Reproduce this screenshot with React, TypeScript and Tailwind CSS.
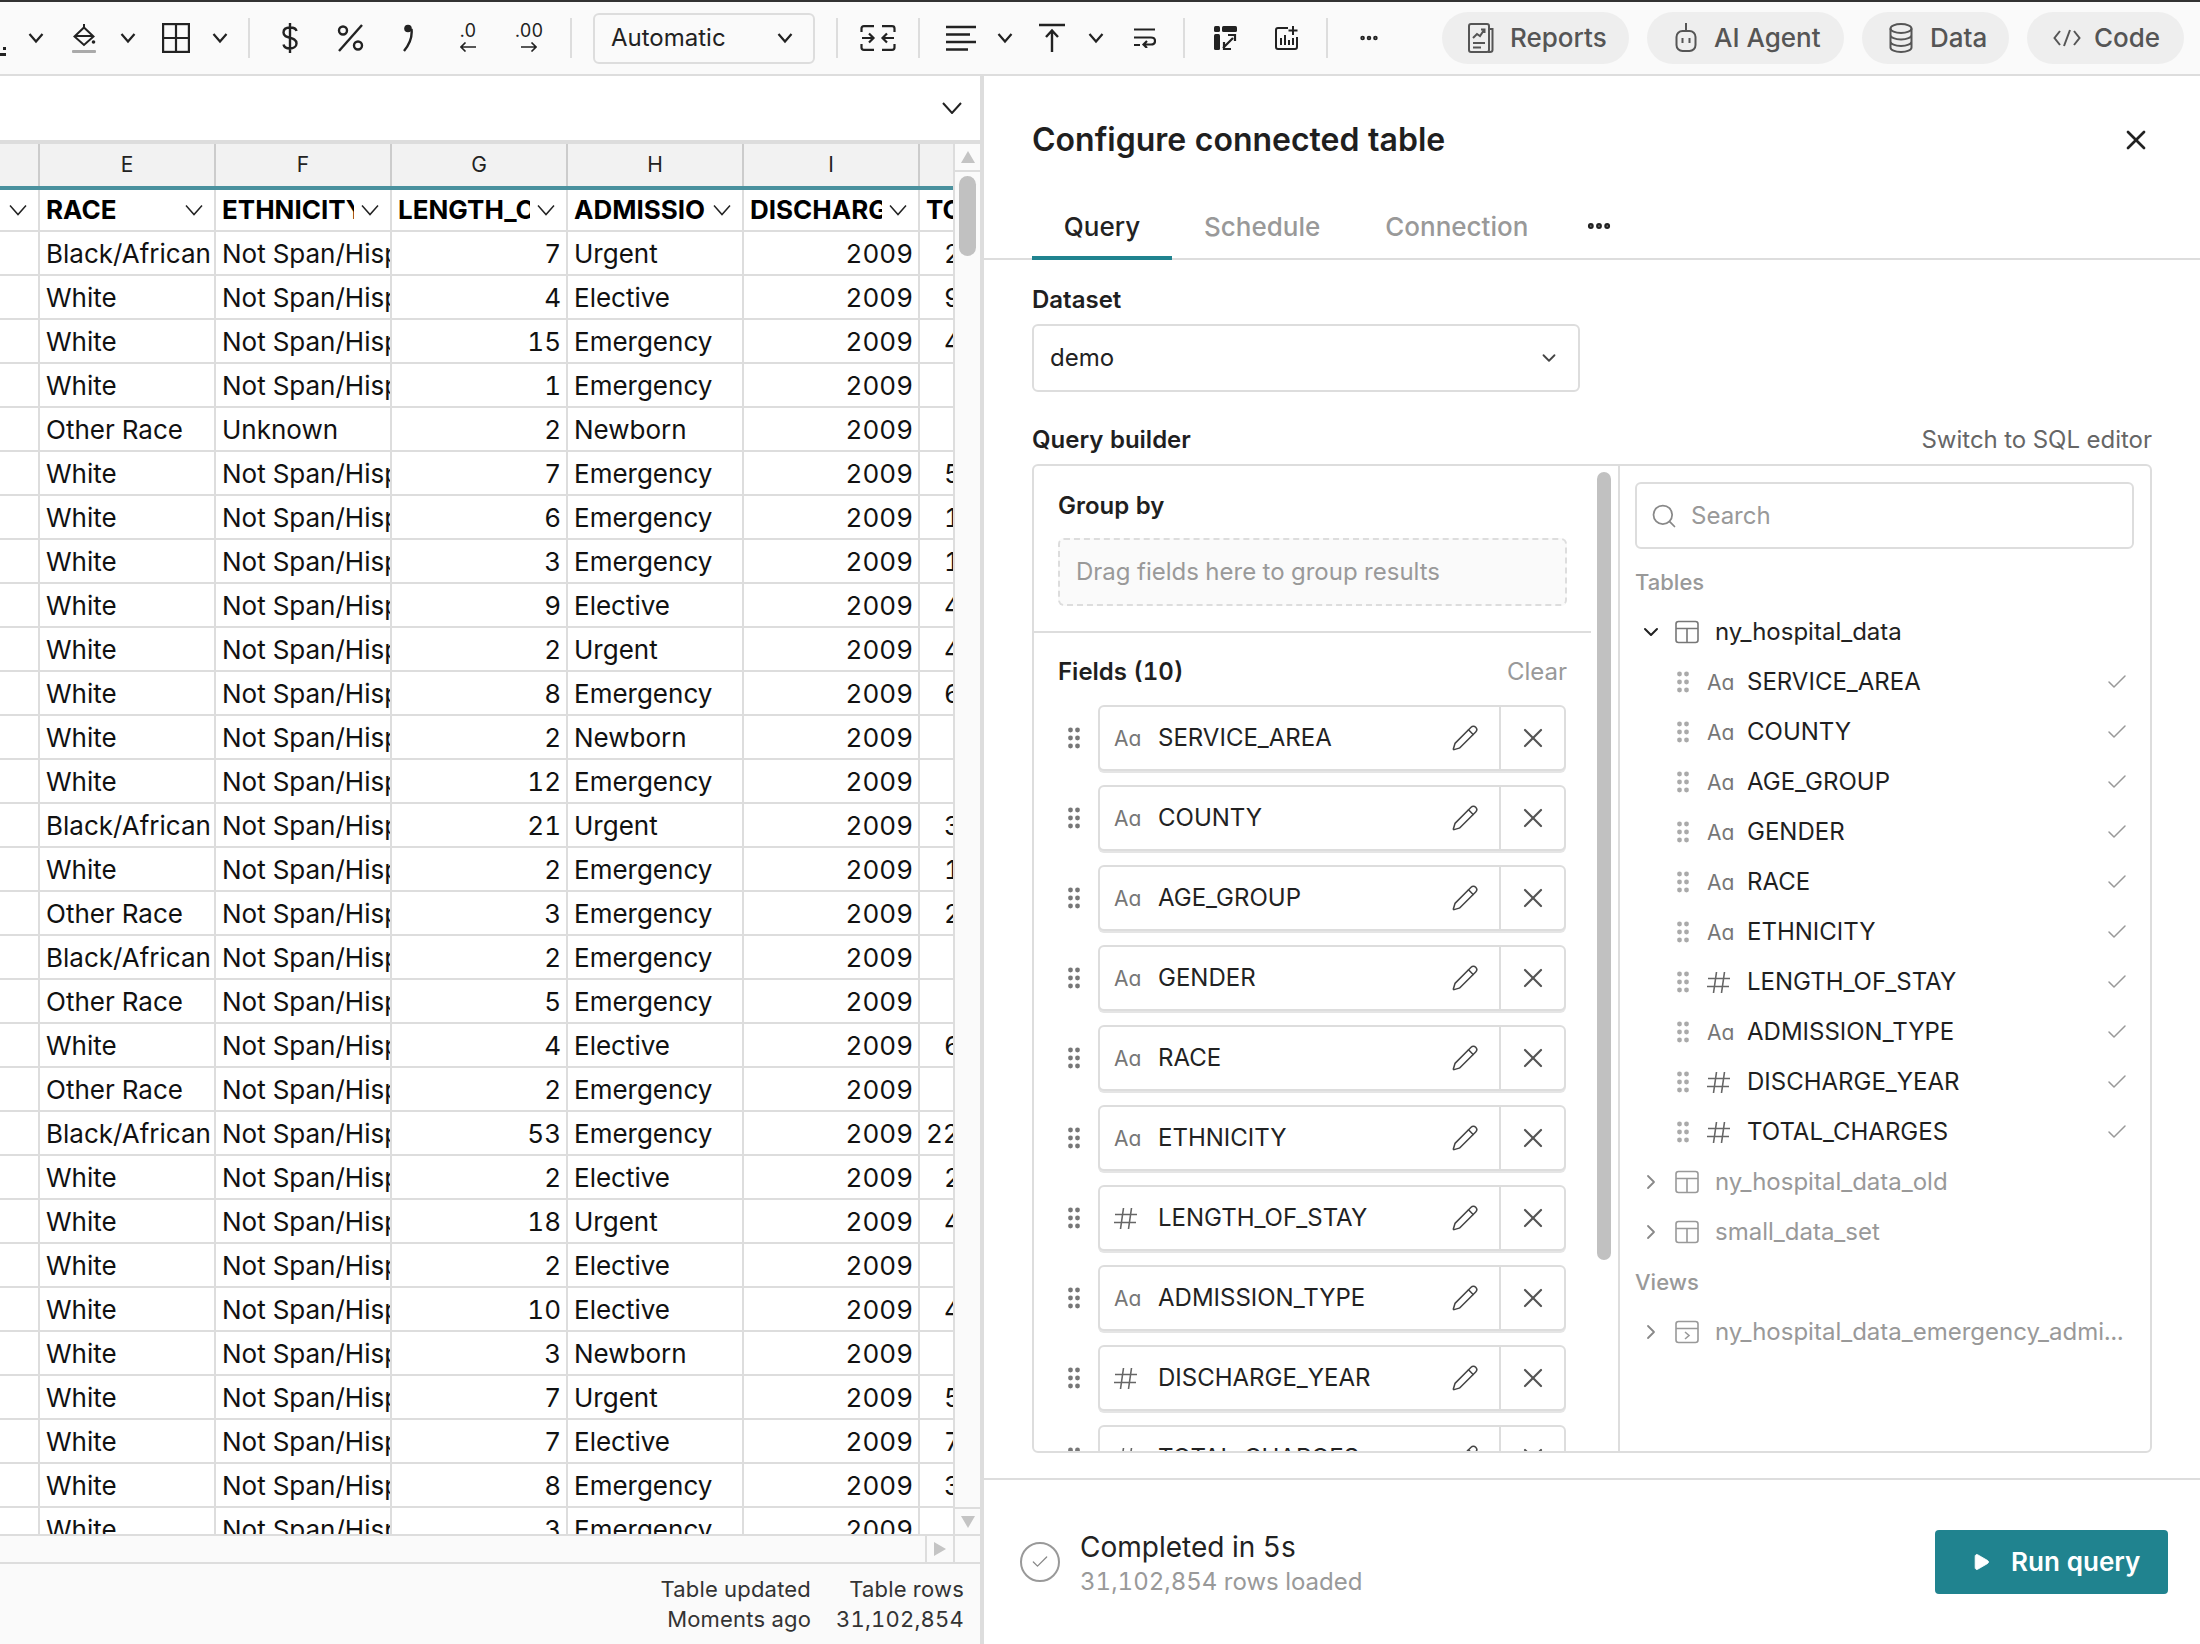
import React from "react";
import { ChevronDown, ChevronRight, X, Search, Check, Pencil, Ellipsis, Play } from "lucide-react";

type Row = [string, string, number, string, string];
const rows: Row[] = [
  ["Black/African", "Not Span/Hispanic", 7, "Urgent", "2"],
  ["White", "Not Span/Hispanic", 4, "Elective", "9"],
  ["White", "Not Span/Hispanic", 15, "Emergency", "4"],
  ["White", "Not Span/Hispanic", 1, "Emergency", ""],
  ["Other Race", "Unknown", 2, "Newborn", ""],
  ["White", "Not Span/Hispanic", 7, "Emergency", "5"],
  ["White", "Not Span/Hispanic", 6, "Emergency", "1"],
  ["White", "Not Span/Hispanic", 3, "Emergency", "1"],
  ["White", "Not Span/Hispanic", 9, "Elective", "4"],
  ["White", "Not Span/Hispanic", 2, "Urgent", "4"],
  ["White", "Not Span/Hispanic", 8, "Emergency", "6"],
  ["White", "Not Span/Hispanic", 2, "Newborn", ""],
  ["White", "Not Span/Hispanic", 12, "Emergency", ""],
  ["Black/African", "Not Span/Hispanic", 21, "Urgent", "3"],
  ["White", "Not Span/Hispanic", 2, "Emergency", "1"],
  ["Other Race", "Not Span/Hispanic", 3, "Emergency", "2"],
  ["Black/African", "Not Span/Hispanic", 2, "Emergency", ""],
  ["Other Race", "Not Span/Hispanic", 5, "Emergency", ""],
  ["White", "Not Span/Hispanic", 4, "Elective", "6"],
  ["Other Race", "Not Span/Hispanic", 2, "Emergency", ""],
  ["Black/African", "Not Span/Hispanic", 53, "Emergency", "22"],
  ["White", "Not Span/Hispanic", 2, "Elective", "2"],
  ["White", "Not Span/Hispanic", 18, "Urgent", "4"],
  ["White", "Not Span/Hispanic", 2, "Elective", ""],
  ["White", "Not Span/Hispanic", 10, "Elective", "4"],
  ["White", "Not Span/Hispanic", 3, "Newborn", ""],
  ["White", "Not Span/Hispanic", 7, "Urgent", "5"],
  ["White", "Not Span/Hispanic", 7, "Elective", "7"],
  ["White", "Not Span/Hispanic", 8, "Emergency", "3"],
  ["White", "Not Span/Hispanic", 3, "Emergency", ""],
];

const fields: [string, boolean][] = [
  ["SERVICE_AREA", false],
  ["COUNTY", false],
  ["AGE_GROUP", false],
  ["GENDER", false],
  ["RACE", false],
  ["ETHNICITY", false],
  ["LENGTH_OF_STAY", true],
  ["ADMISSION_TYPE", false],
  ["DISCHARGE_YEAR", true],
  ["TOTAL_CHARGES", true],
];

const Chev = ({ className }: { className: string }) => (
  <svg viewBox="0 0 16 12" className={`w-[16px] h-[12px] shrink-0 ${className}`} fill="none" stroke="#222" strokeWidth="2.2">
    <path d="M1.5 2 L8 9.5 L14.5 2" />
  </svg>
);
const Sep = ({ className }: { className: string }) => <div className={`w-[2px] h-[40px] bg-[#ddd] shrink-0 ${className}`} />;

const Grip = ({ color }: { color: string }) => (
  <svg viewBox="0 0 12 22" className="w-[12px] h-[22px] shrink-0" fill={color}>
    {[3, 11, 19].map((y) => (
      <g key={y}>
        <circle cx="2.5" cy={y} r="2.4" />
        <circle cx="9.5" cy={y} r="2.4" />
      </g>
    ))}
  </svg>
);

const TypeGlyph = ({ num }: { num: boolean }) =>
  num ? (
    <div className="w-[26px] flex shrink-0">
      <svg viewBox="0 0 24 24" className="w-[24px] h-[24px] shrink-0" fill="none" stroke="#666" strokeWidth="1.6">
        <path d="M9.5 2 L6.5 23 M17.5 2 L14.5 23 M1 8.5 H23 M0 16.5 H22" />
      </svg>
    </div>
  ) : (
    <span className="w-[26px] text-[21px] leading-none text-[#777] shrink-0">Aɑ</span>
  );

const TableIcon = ({ color }: { color: string }) => (
  <svg viewBox="0 0 24 24" className="w-[24px] h-[24px] shrink-0" fill="none" stroke={color} strokeWidth="1.6">
    <rect x="1" y="1.5" width="22" height="21" rx="2.5" />
    <path d="M1 8.5 H23 M12 8.5 V22.5" />
  </svg>
);

const ViewIcon = ({ color }: { color: string }) => (
  <svg viewBox="0 0 24 24" className="w-[24px] h-[24px] shrink-0" fill="none" stroke={color} strokeWidth="1.6">
    <rect x="1" y="1.5" width="22" height="21" rx="2.5" />
    <path d="M1 8.5 H23 M10 12 L14 15.5 L10 19" />
  </svg>
);

function Toolbar() {
  return (
    <div className="h-[74px] shrink-0 flex items-center bg-[#fafafa] border-b-2 border-[#ddd]">
      <div className="w-[6px] h-[12px] mt-[24px] flex flex-col justify-end gap-[3px] shrink-0">
        <div className="h-[3px] w-[3px] ml-[3px] bg-[#222]" />
        <div className="h-[3px] w-[6px] bg-[#222]" />
      </div>
      <Chev className="ml-[22px]" />
      <svg viewBox="0 0 24 30" className="w-[24px] h-[30px] ml-[28px] shrink-0" fill="none" stroke="#222" strokeWidth="2">
        <path d="M12 1 V5 M12 4.5 L21.5 13.5 L12 22 L2.5 13.5 Z M3 13 H21" />
        <circle cx="21.5" cy="19" r="1.8" fill="#222" stroke="none" />
        <rect x="0" y="27" width="24" height="3" rx="1" fill="#aaa" stroke="none" />
      </svg>
      <Chev className="ml-[24px]" />
      <svg viewBox="0 0 28 30" className="w-[28px] h-[30px] ml-[26px] shrink-0" fill="none" stroke="#222" strokeWidth="2.2">
        <rect x="1.1" y="1.1" width="25.8" height="27.8" />
        <path d="M14 1 V29 M1 15 H27" />
      </svg>
      <Chev className="ml-[22px]" />
      <Sep className="ml-[20px]" />
      <svg viewBox="0 0 16 30" className="w-[16px] h-[30px] ml-[32px] shrink-0" fill="none" stroke="#222" strokeWidth="2.4">
        <path d="M8 0 V30 M14.5 8 C14 5.5 11.5 4.5 8 4.5 C4 4.5 1.5 6.5 1.5 9.5 C1.5 17 14.5 12.5 14.5 20.5 C14.5 23.5 11.5 25.5 8 25.5 C4.5 25.5 2 24 1.5 21.5" />
      </svg>
      <svg viewBox="0 0 27 28" className="w-[27px] h-[28px] ml-[39px] shrink-0" fill="none" stroke="#222" strokeWidth="2.4">
        <path d="M25 1 L2 27" />
        <circle cx="6" cy="6.5" r="4" />
        <circle cx="21" cy="21.5" r="4" />
      </svg>
      <svg viewBox="0 0 12 28" className="w-[12px] h-[28px] ml-[38px] shrink-0" fill="none" stroke="#222" strokeWidth="2.4">
        <circle cx="6" cy="4.5" r="3.8" fill="#222" stroke="none" />
        <path d="M9.5 5 C10.5 13 7 21 2 27" />
      </svg>
      <div className="w-[16px] ml-[46px] h-[32px] flex flex-col items-center shrink-0">
        <span className="text-[18px] leading-[18px] text-[#222]">.0</span>
        <svg viewBox="0 0 16 10" className="w-[16px] h-[10px] mt-[2px]" fill="none" stroke="#222" strokeWidth="1.6"><path d="M16 5 H1 M5.5 .5 L1 5 L5.5 9.5" /></svg>
      </div>
      <div className="w-[26px] ml-[40px] h-[32px] flex flex-col items-center shrink-0">
        <span className="text-[18px] leading-[18px] text-[#222]">.00</span>
        <svg viewBox="0 0 16 10" className="w-[16px] h-[10px] mt-[2px]" fill="none" stroke="#222" strokeWidth="1.6"><path d="M0 5 H15 M10.5 .5 L15 5 L10.5 9.5" /></svg>
      </div>
      <Sep className="ml-[28px]" />
      <div className="w-[222px] h-[51px] ml-[21px] shrink-0 border-2 border-[#ddd] rounded-[6px] flex items-center justify-between pl-[16px] pr-[20px]">
        <span className="text-[24px] text-[#222]">Automatic</span>
        <Chev className="" />
      </div>
      <Sep className="ml-[21px]" />
      <svg viewBox="0 0 36 26" className="w-[36px] h-[26px] ml-[22px] shrink-0" fill="none" stroke="#222" strokeWidth="2.2">
        <path d="M1.5 7 V3.5 Q1.5 1.2 4 1.2 H14 M1.5 19 V22.5 Q1.5 24.8 4 24.8 H14 M22 1.2 H32 Q34.5 1.2 34.5 3.5 V7 M22 24.8 H32 Q34.5 24.8 34.5 22.5 V19" />
        <path d="M2 13 H13 M9 8.5 L13.5 13 L9 17.5 M34 13 H23 M27 8.5 L22.5 13 L27 17.5" />
      </svg>
      <Sep className="ml-[22px]" />
      <svg viewBox="0 0 30 26" className="w-[30px] h-[26px] ml-[26px] shrink-0" fill="none" stroke="#222" strokeWidth="2.4">
        <path d="M0 2 H30 M0 9.5 H24 M0 17 H30 M0 24.5 H22" />
      </svg>
      <Chev className="ml-[21px]" />
      <svg viewBox="0 0 26 30" className="w-[26px] h-[30px] ml-[26px] shrink-0" fill="none" stroke="#222" strokeWidth="2.4">
        <path d="M0 2 H26 M13 29 V8 M7 14 L13 7.5 L19 14" />
      </svg>
      <Chev className="ml-[23px]" />
      <svg viewBox="0 0 22 20" className="w-[22px] h-[20px] ml-[30px] shrink-0" fill="none" stroke="#222" strokeWidth="2.2">
        <path d="M0 1.5 H21 M0 9.5 H17 Q21 9.5 21 13 Q21 16.5 17 16.5 H10 M13 13 L9.5 16.5 L13 20 M0 17 H6" />
      </svg>
      <Sep className="ml-[27px]" />
      <svg viewBox="0 0 24 24" className="w-[24px] h-[24px] ml-[29px] shrink-0" fill="#222">
        <rect x="0" y="0" width="6" height="6" rx="1.5" />
        <rect x="8" y="0" width="15" height="6" rx="1.5" />
        <rect x="0" y="8" width="6" height="16" rx="1.5" />
        <path d="M9 22 L19 12 M10 16 V23 H17 M14 9 H21 V15" fill="none" stroke="#222" strokeWidth="2.2" />
      </svg>
      <svg viewBox="0 0 24 24" className="w-[24px] h-[24px] ml-[37px] shrink-0" fill="none" stroke="#222" strokeWidth="2">
        <path d="M13 2 H3 Q1 2 1 4 V21 Q1 23 3 23 H20 Q22 23 22 21 V11" />
        <path d="M18 0 V9 M13.5 4.5 H22.5 M6 12 V19 M10 9 V19 M14 14 V19 M18 12 V19" />
      </svg>
      <Sep className="ml-[27px]" />
      <Ellipsis className="w-[22px] h-[22px] ml-[30px] shrink-0 text-[#222]" strokeWidth={3} />
      <div className="w-[187px] h-[52px] ml-[62px] shrink-0 rounded-full bg-[#eee] flex items-center pl-[26px] gap-[16px] text-[#555] text-[26px] font-medium">
        <svg viewBox="0 0 26 30" className="w-[26px] h-[30px] shrink-0" fill="none" stroke="#555" strokeWidth="2">
          <rect x="1" y="1" width="20" height="28" rx="2" />
          <path d="M21 6 H24.5 V27 Q24.5 29 22 29 H20 M5 20 H17 M5 24.5 H13 M5 15 L9 11 L12 13 L16 7 M13 6.5 H16.5 V10" />
        </svg>
        <span className="pb-[2px]">Reports</span>
      </div>
      <div className="w-[197px] h-[52px] ml-[18px] shrink-0 rounded-full bg-[#eee] flex items-center pl-[28px] gap-[17px] text-[#555] text-[26px] font-medium">
        <svg viewBox="0 0 22 30" className="w-[22px] h-[30px] shrink-0" fill="none" stroke="#555" strokeWidth="2">
          <path d="M11 0 V8" />
          <rect x="1.5" y="8" width="19" height="20" rx="6" />
          <path d="M7.5 15 V20 M14.5 15 V20" />
        </svg>
        <span className="pb-[2px]">AI Agent</span>
      </div>
      <div className="w-[147px] h-[52px] ml-[18px] shrink-0 rounded-full bg-[#eee] flex items-center pl-[27px] gap-[17px] text-[#555] text-[26px] font-medium">
        <svg viewBox="0 0 24 30" className="w-[24px] h-[30px] shrink-0" fill="none" stroke="#555" strokeWidth="2">
          <ellipse cx="12" cy="5.5" rx="10.5" ry="4.5" />
          <path d="M1.5 5.5 V24.5 C1.5 27 6 29 12 29 C18 29 22.5 27 22.5 24.5 V5.5 M1.5 12 C1.5 14.5 6 16.5 12 16.5 C18 16.5 22.5 14.5 22.5 12 M1.5 18.5 C1.5 21 6 23 12 23 C18 23 22.5 21 22.5 18.5" />
        </svg>
        <span className="pb-[2px]">Data</span>
      </div>
      <div className="w-[157px] h-[52px] ml-[18px] shrink-0 rounded-full bg-[#eee] flex items-center pl-[26px] gap-[13px] text-[#555] text-[26px] font-medium">
        <svg viewBox="0 0 28 18" className="w-[28px] h-[18px] shrink-0" fill="none" stroke="#555" strokeWidth="2">
          <path d="M7 2 L1.5 9 L7 16 M21 2 L26.5 9 L21 16 M17 1 L11 17" />
        </svg>
        <span className="pb-[2px]">Code</span>
      </div>
    </div>
  );
}

const Thin = () => (
  <svg viewBox="0 0 18 12" className="w-[18px] h-[12px] shrink-0" fill="none" stroke="#222" strokeWidth="1.5">
    <path d="M1 1.5 L9 10.5 L17 1.5" />
  </svg>
);

const Cell = ({ children, right }: { children?: React.ReactNode; right?: boolean }) => (
  <div
    className={
      right
        ? "w-[176px] shrink-0 border-r-2 border-[#ddd] pr-[5px] text-right overflow-hidden whitespace-nowrap"
        : "w-[176px] shrink-0 border-r-2 border-[#ddd] pl-[6px] overflow-hidden whitespace-nowrap"
    }
  >
    {children}
  </div>
);

function Sheet() {
  const heads = ["RACE", "ETHNICITY", "LENGTH_OF_STAY", "ADMISSION_TYPE", "DISCHARGE_YEAR"];
  return (
    <div className="h-[1396px] shrink-0 border-t-4 border-b-2 border-[#ddd] flex">
      <div className="w-[953px] shrink-0 overflow-hidden text-[26px] text-[#111]">
        <div className="h-[42px] flex bg-[#f2f2f2] text-[21px] text-[#222] leading-[42px]">
          <div className="w-[40px] shrink-0 border-r-2 border-[#ccc]" />
          {["E", "F", "G", "H", "I"].map((c) => (
            <div key={c} className="w-[176px] shrink-0 border-r-2 border-[#ccc] text-center">{c}</div>
          ))}
        </div>
        <div className="h-[4px] bg-[#4a919e]" />
        <div className="h-[42px] flex border-b-2 border-[#ddd] font-bold text-black leading-[40px]">
          <div className="w-[40px] shrink-0 border-r-2 border-[#ddd] flex items-center pl-[9px]"><Thin /></div>
          {heads.map((h) => (
            <div key={h} className="w-[176px] shrink-0 border-r-2 border-[#ddd] flex items-center pl-[6px] pr-[11px]">
              <div className="w-[132px] overflow-hidden whitespace-nowrap shrink-0">{h}</div>
              <div className="ml-auto flex"><Thin /></div>
            </div>
          ))}
          <div className="pl-[6px] whitespace-nowrap">TOTAL_CHARGES</div>
        </div>
        {rows.map((r, i) => (
          <div key={i} className="h-[44px] flex border-b-2 border-[#ddd] leading-[44px]">
            <div className="w-[40px] shrink-0 border-r-2 border-[#ddd]" />
            <Cell>{r[0]}</Cell>
            <Cell>{r[1]}</Cell>
            <Cell right>{r[2]}</Cell>
            <Cell>{r[3]}</Cell>
            <Cell right>2009</Cell>
            <div className={r[4].length > 1 ? "pl-[6px]" : "pl-[24px]"}>{r[4]}</div>
          </div>
        ))}
      </div>
      <div className="w-[27px] shrink-0 bg-[#fafafa] border-l-2 border-[#ddd] flex flex-col items-center">
        <div className="h-[28px] w-full border-b-2 border-[#ddd] flex items-center justify-center">
          <div className="w-0 h-0 border-x-[7px] border-x-transparent border-b-[12px] border-b-[#c4c4c4]" />
        </div>
        <div className="w-[17px] h-[80px] mt-[4px] rounded-full bg-[#c1c1c1]" />
        <div className="mt-auto h-[27px] w-full border-t-2 border-[#ddd] flex items-center justify-center">
          <div className="w-0 h-0 border-x-[7px] border-x-transparent border-t-[12px] border-t-[#c4c4c4]" />
        </div>
      </div>
    </div>
  );
}

function LeftPane() {
  return (
    <div className="w-[984px] shrink-0 border-r-4 border-[#ddd] flex flex-col">
      <div className="h-[64px] shrink-0 flex items-center justify-end pr-[18px]">
        <svg viewBox="0 0 20 12" className="w-[20px] h-[12px]" fill="none" stroke="#222" strokeWidth="2"><path d="M1 1 L10 11 L19 1" /></svg>
      </div>
      <Sheet />
      <div className="h-[28px] shrink-0 bg-[#fafafa] border-b-2 border-[#ddd] flex justify-end">
        <div className="w-[28px] border-l-2 border-[#ddd] flex items-center justify-center">
          <div className="w-0 h-0 border-y-[7px] border-y-transparent border-l-[12px] border-l-[#c4c4c4]" />
        </div>
        <div className="w-[27px] border-l-2 border-[#ddd]" />
      </div>
      <div className="flex-1 bg-[#fafafa] flex justify-end gap-[25px] pr-[16px] pt-[10px] text-[22px] tracking-[0.2px] leading-[30px] text-[#333] text-right">
        <div>
          <div>Table updated</div>
          <div>Moments ago</div>
        </div>
        <div>
          <div>Table rows</div>
          <div>31,102,854</div>
        </div>
      </div>
    </div>
  );
}

function FieldCard({ name, num }: { name: string; num: boolean }) {
  return (
    <div className="h-[66px] mb-[14px] flex items-center shrink-0">
      <div className="w-[40px] pl-[10px] flex shrink-0"><Grip color="#777" /></div>
      <div className="w-[468px] h-[66px] border-2 border-[#ddd] rounded-[6px] shadow-[0_2px_0_#e5e5e5] flex items-center shrink-0 bg-white">
        <div className="flex-1 flex items-center pl-[14px] min-w-0 h-full">
          <TypeGlyph num={num} />
          <span className="ml-[18px] text-[24px] text-[#222] whitespace-nowrap">{name}</span>
          <Pencil className="ml-auto mr-[20px] w-[28px] h-[28px] text-[#444] shrink-0" strokeWidth={1.3} />
        </div>
        <div className="w-[65px] h-full border-l-2 border-[#ddd] flex items-center justify-center shrink-0">
          <X className="w-[32px] h-[32px] text-[#555]" strokeWidth={1.6} />
        </div>
      </div>
    </div>
  );
}

function QueryBuilder() {
  return (
    <div className="mt-[8px] h-[989px] w-[1120px] border-2 border-[#ddd] rounded-[6px] flex overflow-hidden relative">
      <div className="w-[584px] shrink-0 flex flex-col overflow-hidden relative">
        <div className="w-[557px] shrink-0 border-b-2 border-[#ddd] px-[24px] pb-[25px]">
          <div className="pt-[24px] h-[56px] text-[24px] font-semibold leading-[32px] text-[#1f1f1f]">Group by</div>
          <div className="mt-[16px] w-[509px] h-[68px] border-2 border-dashed border-[#ddd] rounded-[6px] bg-[#fafafa] flex items-center pl-[16px] text-[24px] text-[#999]">
            Drag fields here to group results
          </div>
        </div>
        <div className="w-[557px] px-[24px]">
          <div className="mt-[23px] h-[32px] flex items-center justify-between">
            <span className="text-[24px] font-semibold text-[#1f1f1f]">Fields (10)</span>
            <span className="text-[24px] text-[#999]">Clear</span>
          </div>
          <div className="mt-[17px] flex flex-col">
            {fields.map(([n, h]) => (
              <FieldCard key={n} name={n} num={h} />
            ))}
          </div>
        </div>
        <div className="absolute left-[563px] top-[6px] w-[14px] h-[788px] rounded-full bg-[#c1c1c1]" />
      </div>
      <div className="flex-1 border-l-2 border-[#ddd] pl-[15px] pr-[16px] pt-[16px] min-w-0">
        <div className="h-[67px] border-2 border-[#ddd] rounded-[6px] flex items-center pl-[13px]">
          <Search className="w-[28px] h-[28px] text-[#888]" strokeWidth={1.5} />
          <span className="ml-[13px] text-[24px] text-[#999]">Search</span>
        </div>
        <div className="mt-[18px] h-[30px] mb-[10px] text-[22px] font-medium leading-[30px] text-[#999]">Tables</div>
        <div className="h-[50px] flex items-center text-[24px] text-[#222]">
          <ChevronDown className="w-[24px] h-[24px] ml-[4px] text-[#222] shrink-0" strokeWidth={2} />
          <div className="ml-[12px] flex"><TableIcon color="#777" /></div>
          <span className="ml-[16px]">ny_hospital_data</span>
        </div>
        {fields.map(([n, h]) => (
          <div key={n} className="h-[50px] flex items-center text-[24px] text-[#1f1f1f]">
            <div className="ml-[42px] flex"><Grip color="#aaa" /></div>
            <div className="ml-[18px] w-[40px] flex shrink-0"><TypeGlyph num={h} /></div>
            <span>{n}</span>
            <Check className="ml-auto mr-[5px] w-[24px] h-[24px] text-[#999]" strokeWidth={1.5} />
          </div>
        ))}
        {["ny_hospital_data_old", "small_data_set"].map((t) => (
          <div key={t} className="h-[50px] flex items-center text-[24px] text-[#999]">
            <ChevronRight className="w-[24px] h-[24px] ml-[4px] text-[#888] shrink-0" strokeWidth={1.8} />
            <div className="ml-[12px] flex"><TableIcon color="#999" /></div>
            <span className="ml-[16px]">{t}</span>
          </div>
        ))}
        <div className="mt-[10px] h-[30px] mb-[10px] text-[22px] font-medium leading-[30px] text-[#999]">Views</div>
        <div className="h-[50px] flex items-center text-[24px] text-[#999]">
          <ChevronRight className="w-[24px] h-[24px] ml-[4px] text-[#888] shrink-0" strokeWidth={1.8} />
          <div className="ml-[12px] flex"><ViewIcon color="#999" /></div>
          <span className="ml-[16px] whitespace-nowrap">ny_hospital_data_emergency_admi...</span>
        </div>
      </div>
    </div>
  );
}

function RightPane() {
  return (
    <div className="flex-1 min-w-0 flex flex-col">
      <div className="h-[128px] shrink-0 pl-[48px] pr-[48px] flex items-center justify-between">
        <span className="text-[32px] font-semibold text-[#1f1f1f]">Configure connected table</span>
        <X className="w-[32px] h-[32px] text-[#222]" strokeWidth={2} />
      </div>
      <div className="h-[56px] shrink-0 border-b-2 border-[#ddd] pl-[48px] flex text-[26px]">
        <div className="w-[140px] h-[56px] border-b-4 border-[#20838f] flex justify-center pt-[3px] text-[#222] font-medium">Query</div>
        <div className="ml-[32px] pt-[3px] text-[#999] font-medium">Schedule</div>
        <div className="ml-[65px] pt-[3px] text-[#999] font-medium">Connection</div>
        <Ellipsis className="ml-[57px] mt-[8px] w-[28px] h-[28px] text-[#222]" strokeWidth={3} />
      </div>
      <div className="flex-1 min-h-0 px-[48px]">
        <div className="mt-[25px] h-[30px] text-[24px] font-semibold leading-[30px] text-[#1f1f1f]">Dataset</div>
        <div className="mt-[9px] w-[548px] h-[68px] border-2 border-[#ddd] rounded-[6px] flex items-center justify-between pl-[16px] pr-[18px] text-[24px] text-[#222]">
          <span>demo</span>
          <ChevronDown className="w-[22px] h-[22px] text-[#444]" strokeWidth={2} />
        </div>
        <div className="mt-[32px] h-[32px] flex items-center justify-between w-[1120px]">
          <span className="text-[24px] font-semibold text-[#1f1f1f]">Query builder</span>
          <span className="text-[24px] text-[#666]">Switch to SQL editor</span>
        </div>
        <QueryBuilder />
      </div>
      <div className="h-[166px] shrink-0 border-t-2 border-[#ddd] flex items-center pl-[36px] pr-[32px]">
        <div className="w-[40px] h-[40px] rounded-full border-2 border-[#999] flex items-center justify-center shrink-0">
          <Check className="w-[20px] h-[20px] text-[#888]" strokeWidth={1.5} />
        </div>
        <div className="ml-[20px] pt-[3px]">
          <div className="text-[28px] leading-[36px] text-[#222]">Completed in 5s</div>
          <div className="text-[24px] leading-[34px] text-[#999]">31,102,854 rows loaded</div>
        </div>
        <div className="ml-auto w-[233px] h-[64px] rounded-[4px] bg-[#20838f] flex items-center pl-[36px] text-white text-[26px] font-semibold">
          <Play className="w-[20px] h-[22px] fill-white text-white" strokeWidth={1} />
          <span className="ml-[20px] pb-[2px]">Run query</span>
        </div>
      </div>
    </div>
  );
}

export default function App() {
  return (
    <div className="w-[2200px] h-[1644px] overflow-hidden bg-white flex flex-col font-[Inter,sans-serif] tabular-nums">
      <div className="h-[2px] shrink-0 bg-[#333]" />
      <Toolbar />
      <div className="flex-1 min-h-0 flex">
        <LeftPane />
        <RightPane />
      </div>
    </div>
  );
}
